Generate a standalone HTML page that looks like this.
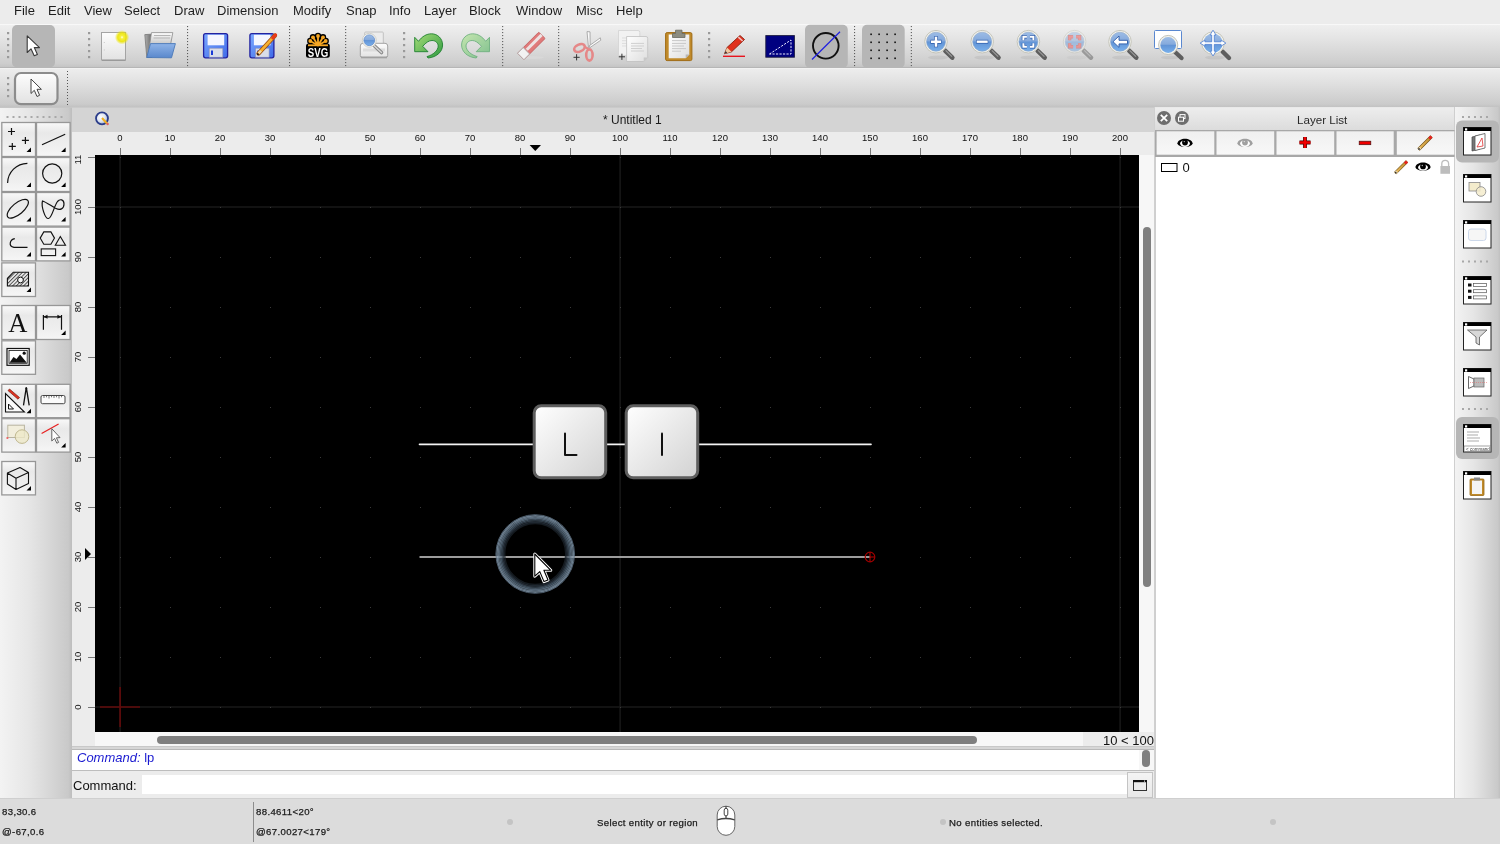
<!DOCTYPE html><html><head><meta charset="utf-8"><style>
*{box-sizing:border-box}
html,body{margin:0;padding:0;width:1500px;height:844px;overflow:hidden;background:#ececec;font-family:"Liberation Sans",sans-serif;}
.ab{position:absolute}
.menu{position:absolute;top:3px;font-size:13px;color:#1e1e1e;line-height:16px;white-space:nowrap}
svg{position:absolute;overflow:visible}
body>div,body>svg{will-change:transform}
.dots{position:absolute;width:2px;border-left:2px dotted #8a8a8a}
.hdl{position:absolute;width:3px;background:repeating-linear-gradient(#9a9a9a 0 3px,transparent 3px 6px)}
.tbtn{position:absolute;background:linear-gradient(#fbfbfb,#eeeeee 50%,#e2e2e2);border:2px solid #9c9c9c}
.st{position:absolute;font-size:9.6px;line-height:12px;color:#1a1a1a;white-space:nowrap;letter-spacing:0.36px;-webkit-text-stroke:0.25px #1a1a1a}
</style></head><body>
<div class="menu" style="left:14px">File</div>
<div class="menu" style="left:47.5px">Edit</div>
<div class="menu" style="left:83.5px">View</div>
<div class="menu" style="left:124.3px">Select</div>
<div class="menu" style="left:174px">Draw</div>
<div class="menu" style="left:217.3px">Dimension</div>
<div class="menu" style="left:292.5px">Modify</div>
<div class="menu" style="left:346px">Snap</div>
<div class="menu" style="left:389.3px">Info</div>
<div class="menu" style="left:424px">Layer</div>
<div class="menu" style="left:469.3px">Block</div>
<div class="menu" style="left:515.5px">Window</div>
<div class="menu" style="left:576px">Misc</div>
<div class="menu" style="left:616px">Help</div>
<div class="ab" style="left:0;top:24px;width:1500px;height:44px;background:linear-gradient(#efefef,#e3e3e3 35%,#cdcdcd 92%,#c4c4c4);border-top:1px solid #f8f8f8;border-bottom:1px solid #b6b6b6"></div>
<div class="ab" style="left:0;top:68px;width:1500px;height:39.5px;background:linear-gradient(#ededed,#e1e1e1 35%,#cbcbcb 92%,#c2c2c2);border-top:1px solid #f2f2f2;border-bottom:1px solid #b2b2b2"></div>
<div class="ab" style="left:0;top:107px;width:72px;height:691px;background:linear-gradient(90deg,#f3f3f3,#e6e6e6 40%,#c9c9c9 95%,#bdbdbd);border-top:1px solid #c6c6c6"></div>
<div class="ab" style="left:72px;top:107px;width:1082px;height:25px;background:#d4d4d4;border-top:1px solid #cacaca"></div>
<div class="ab" style="left:72px;top:132px;width:1082px;height:23px;background:#ececec"></div>
<div class="ab" style="left:602.5px;top:113px;font-size:12px;line-height:15px;color:#1a1a1a;white-space:nowrap">* Untitled 1</div>
<svg style="left:95px;top:111px" width="16" height="16"><defs><radialGradient id="mdi" cx="0.4" cy="0.4" r="0.6"><stop offset="0" stop-color="#fff"/><stop offset="0.6" stop-color="#dde4f0"/><stop offset="1" stop-color="#9aaccc"/></radialGradient></defs><circle cx="7" cy="7.3" r="6" fill="url(#mdi)" stroke="#2a3c8a" stroke-width="1.8"/><path d="M7 7 L12 12.5" stroke="#f0b020" stroke-width="2"/><circle cx="12.6" cy="13" r="1.2" fill="#e06060"/></svg>
<div class="ab" style="left:72px;top:155px;width:23px;height:591px;background:#ececec"></div>
<div class="ab" style="left:95px;top:155px;width:1044px;height:577px;background:#000"></div>
<div class="ab" style="left:1139px;top:155px;width:15px;height:577px;background:#f7f7f7"></div>
<div class="ab" style="left:95px;top:732px;width:988px;height:14px;background:#f7f7f7"></div>
<div class="ab" style="left:1083px;top:732px;width:71px;height:14px;background:#ececec"></div>
<div class="ab" style="left:1103px;top:732.8px;font-size:13px;line-height:16px;color:#111;white-space:nowrap">10 &lt; 100</div>
<div class="ab" style="left:1143px;top:227px;width:8px;height:360px;background:#7f7f7f;border-radius:4px"></div>
<div class="ab" style="left:157px;top:736px;width:820px;height:8px;background:#7f7f7f;border-radius:4px"></div>
<div class="ab" style="left:72px;top:746px;width:1082px;height:4px;background:#d6d6d6;border-top:1px solid #c8c8c8;border-bottom:1px solid #b8b8b8"></div>
<div class="ab" style="left:72px;top:750px;width:1082px;height:20px;background:#fff"></div>
<div class="ab" style="left:77px;top:750px;font-size:13px;line-height:16px;color:#1a1ad0;font-style:italic;white-space:nowrap">Command: <span style="font-style:normal">lp</span></div>
<div class="ab" style="left:1139px;top:750px;width:15px;height:20px;background:#f7f7f7"></div>
<div class="ab" style="left:1142px;top:750px;width:8px;height:17px;background:#7f7f7f;border-radius:4px"></div>
<div class="ab" style="left:72px;top:770px;width:1082px;height:28px;background:#ececec;border-top:1px solid #bdbdbd"></div>
<div class="ab" style="left:73px;top:778px;font-size:13px;line-height:16px;color:#111;white-space:nowrap">Command:</div>
<div class="ab" style="left:142px;top:775px;width:985px;height:19px;background:#fff"></div>
<div class="ab" style="left:1127px;top:772px;width:26px;height:26px;background:linear-gradient(#f4f4f4,#e8e8e8);border:1px solid #c4c4c4"></div>
<svg style="left:1133px;top:780px" width="14" height="11"><rect x="0.5" y="0.5" width="13" height="10" fill="#ececec" stroke="#333" stroke-width="1"/><rect x="0" y="0" width="14" height="2.2" fill="#111"/><rect x="11" y="0.6" width="1" height="1" fill="#fff"/></svg>
<div class="ab" style="left:1154px;top:107px;width:300px;height:691px;background:#e9e9e9;border-left:1px solid #d0d0d0"></div>
<div class="ab" style="left:1155px;top:108px;width:299px;height:22px;background:linear-gradient(#ededed,#dcdcdc);"></div>
<div class="ab" style="left:1297px;top:111.5px;font-size:11.6px;line-height:15px;color:#2a2a2a;white-space:nowrap">Layer List</div>
<div class="ab" style="left:1155px;top:157px;width:299px;height:641px;background:#fff;border-left:1px solid #cfcfcf"></div>
<div class="ab" style="left:1454px;top:107px;width:46px;height:691px;background:linear-gradient(90deg,#f3f3f3,#e6e6e6 40%,#c9c9c9 95%,#c0c0c0);border-left:1px solid #cfcfcf"></div>
<div class="ab" style="left:0;top:798px;width:1500px;height:46px;background:#dcdcdc;border-top:1px solid #cfcfcf"></div>
<div class="st" style="left:2px;top:806px">83,30.6</div>
<div class="st" style="left:2px;top:826px">@-67,0.6</div>
<div class="ab" style="left:253px;top:802px;width:1px;height:40px;background:#8c8c8c"></div>
<div class="st" style="left:256px;top:806px">88.4611&lt;20°</div>
<div class="st" style="left:256px;top:826px">@67.0027&lt;179°</div>
<div class="st" style="left:597px;top:817px">Select entity or region</div>
<div class="st" style="left:949px;top:817px">No entities selected.</div>
<svg style="left:716px;top:805px" width="20" height="32"><path d="M1.2 10 A8.8 8.8 0 0 1 18.8 10 V21.5 A8.8 8.8 0 0 1 1.2 21.5 Z" fill="#fff" stroke="#555" stroke-width="0.9"/><path d="M1.3 14.8 Q10 12.2 18.7 14.8" fill="none" stroke="#444" stroke-width="1.4"/><rect x="8.2" y="3.3" width="3.6" height="7.6" rx="1.8" fill="#fff" stroke="#444" stroke-width="1"/><path d="M10 1 V3.3 M10 10.9 V13.2" stroke="#444" stroke-width="1.2"/></svg>
<div class="ab" style="left:506.5px;top:819px;width:6px;height:6px;border-radius:3px;background:#c4c4c4"></div>
<div class="ab" style="left:939.5px;top:819px;width:6px;height:6px;border-radius:3px;background:#c4c4c4"></div>
<div class="ab" style="left:1269.5px;top:819px;width:6px;height:6px;border-radius:3px;background:#c4c4c4"></div>
<svg style="left:0;top:0" width="1500" height="844"><defs><clipPath id="vr"><rect x="72" y="155" width="23" height="591"/></clipPath><clipPath id="cv"><rect x="95" y="155" width="1044" height="577"/></clipPath><linearGradient id="key" x1="0" y1="0" x2="1" y2="1"><stop offset="0" stop-color="#ffffff"/><stop offset="1" stop-color="#d2d2d2"/></linearGradient><radialGradient id="ring" cx="0.5" cy="0.5" r="0.5"><stop offset="0.74" stop-color="#6c8294" stop-opacity="0"/><stop offset="0.86" stop-color="#6c8294" stop-opacity="0.9"/><stop offset="0.94" stop-color="#7890a2"/><stop offset="1" stop-color="#7890a2" stop-opacity="0"/></radialGradient></defs><g clip-path="url(#cv)"><line x1="120.1" y1="155" x2="120.1" y2="732" stroke="#181818" stroke-width="1.5"/><line x1="620.1" y1="155" x2="620.1" y2="732" stroke="#181818" stroke-width="1.5"/><line x1="1120.1" y1="155" x2="1120.1" y2="732" stroke="#181818" stroke-width="1.5"/><line x1="95" y1="207" x2="1139" y2="207" stroke="#181818" stroke-width="1.5"/><line x1="95" y1="707" x2="1139" y2="707" stroke="#181818" stroke-width="1.5"/><rect x="120" y="707" width="1" height="1" fill="#3a3a3a"/><rect x="120" y="657" width="1" height="1" fill="#3a3a3a"/><rect x="120" y="607" width="1" height="1" fill="#3a3a3a"/><rect x="120" y="557" width="1" height="1" fill="#3a3a3a"/><rect x="120" y="507" width="1" height="1" fill="#3a3a3a"/><rect x="120" y="457" width="1" height="1" fill="#3a3a3a"/><rect x="120" y="407" width="1" height="1" fill="#3a3a3a"/><rect x="120" y="357" width="1" height="1" fill="#3a3a3a"/><rect x="120" y="307" width="1" height="1" fill="#3a3a3a"/><rect x="120" y="257" width="1" height="1" fill="#3a3a3a"/><rect x="120" y="207" width="1" height="1" fill="#3a3a3a"/><rect x="120" y="157" width="1" height="1" fill="#3a3a3a"/><rect x="170" y="707" width="1" height="1" fill="#3a3a3a"/><rect x="170" y="657" width="1" height="1" fill="#3a3a3a"/><rect x="170" y="607" width="1" height="1" fill="#3a3a3a"/><rect x="170" y="557" width="1" height="1" fill="#3a3a3a"/><rect x="170" y="507" width="1" height="1" fill="#3a3a3a"/><rect x="170" y="457" width="1" height="1" fill="#3a3a3a"/><rect x="170" y="407" width="1" height="1" fill="#3a3a3a"/><rect x="170" y="357" width="1" height="1" fill="#3a3a3a"/><rect x="170" y="307" width="1" height="1" fill="#3a3a3a"/><rect x="170" y="257" width="1" height="1" fill="#3a3a3a"/><rect x="170" y="207" width="1" height="1" fill="#3a3a3a"/><rect x="170" y="157" width="1" height="1" fill="#3a3a3a"/><rect x="220" y="707" width="1" height="1" fill="#3a3a3a"/><rect x="220" y="657" width="1" height="1" fill="#3a3a3a"/><rect x="220" y="607" width="1" height="1" fill="#3a3a3a"/><rect x="220" y="557" width="1" height="1" fill="#3a3a3a"/><rect x="220" y="507" width="1" height="1" fill="#3a3a3a"/><rect x="220" y="457" width="1" height="1" fill="#3a3a3a"/><rect x="220" y="407" width="1" height="1" fill="#3a3a3a"/><rect x="220" y="357" width="1" height="1" fill="#3a3a3a"/><rect x="220" y="307" width="1" height="1" fill="#3a3a3a"/><rect x="220" y="257" width="1" height="1" fill="#3a3a3a"/><rect x="220" y="207" width="1" height="1" fill="#3a3a3a"/><rect x="220" y="157" width="1" height="1" fill="#3a3a3a"/><rect x="270" y="707" width="1" height="1" fill="#3a3a3a"/><rect x="270" y="657" width="1" height="1" fill="#3a3a3a"/><rect x="270" y="607" width="1" height="1" fill="#3a3a3a"/><rect x="270" y="557" width="1" height="1" fill="#3a3a3a"/><rect x="270" y="507" width="1" height="1" fill="#3a3a3a"/><rect x="270" y="457" width="1" height="1" fill="#3a3a3a"/><rect x="270" y="407" width="1" height="1" fill="#3a3a3a"/><rect x="270" y="357" width="1" height="1" fill="#3a3a3a"/><rect x="270" y="307" width="1" height="1" fill="#3a3a3a"/><rect x="270" y="257" width="1" height="1" fill="#3a3a3a"/><rect x="270" y="207" width="1" height="1" fill="#3a3a3a"/><rect x="270" y="157" width="1" height="1" fill="#3a3a3a"/><rect x="320" y="707" width="1" height="1" fill="#3a3a3a"/><rect x="320" y="657" width="1" height="1" fill="#3a3a3a"/><rect x="320" y="607" width="1" height="1" fill="#3a3a3a"/><rect x="320" y="557" width="1" height="1" fill="#3a3a3a"/><rect x="320" y="507" width="1" height="1" fill="#3a3a3a"/><rect x="320" y="457" width="1" height="1" fill="#3a3a3a"/><rect x="320" y="407" width="1" height="1" fill="#3a3a3a"/><rect x="320" y="357" width="1" height="1" fill="#3a3a3a"/><rect x="320" y="307" width="1" height="1" fill="#3a3a3a"/><rect x="320" y="257" width="1" height="1" fill="#3a3a3a"/><rect x="320" y="207" width="1" height="1" fill="#3a3a3a"/><rect x="320" y="157" width="1" height="1" fill="#3a3a3a"/><rect x="370" y="707" width="1" height="1" fill="#3a3a3a"/><rect x="370" y="657" width="1" height="1" fill="#3a3a3a"/><rect x="370" y="607" width="1" height="1" fill="#3a3a3a"/><rect x="370" y="557" width="1" height="1" fill="#3a3a3a"/><rect x="370" y="507" width="1" height="1" fill="#3a3a3a"/><rect x="370" y="457" width="1" height="1" fill="#3a3a3a"/><rect x="370" y="407" width="1" height="1" fill="#3a3a3a"/><rect x="370" y="357" width="1" height="1" fill="#3a3a3a"/><rect x="370" y="307" width="1" height="1" fill="#3a3a3a"/><rect x="370" y="257" width="1" height="1" fill="#3a3a3a"/><rect x="370" y="207" width="1" height="1" fill="#3a3a3a"/><rect x="370" y="157" width="1" height="1" fill="#3a3a3a"/><rect x="420" y="707" width="1" height="1" fill="#3a3a3a"/><rect x="420" y="657" width="1" height="1" fill="#3a3a3a"/><rect x="420" y="607" width="1" height="1" fill="#3a3a3a"/><rect x="420" y="557" width="1" height="1" fill="#3a3a3a"/><rect x="420" y="507" width="1" height="1" fill="#3a3a3a"/><rect x="420" y="457" width="1" height="1" fill="#3a3a3a"/><rect x="420" y="407" width="1" height="1" fill="#3a3a3a"/><rect x="420" y="357" width="1" height="1" fill="#3a3a3a"/><rect x="420" y="307" width="1" height="1" fill="#3a3a3a"/><rect x="420" y="257" width="1" height="1" fill="#3a3a3a"/><rect x="420" y="207" width="1" height="1" fill="#3a3a3a"/><rect x="420" y="157" width="1" height="1" fill="#3a3a3a"/><rect x="470" y="707" width="1" height="1" fill="#3a3a3a"/><rect x="470" y="657" width="1" height="1" fill="#3a3a3a"/><rect x="470" y="607" width="1" height="1" fill="#3a3a3a"/><rect x="470" y="557" width="1" height="1" fill="#3a3a3a"/><rect x="470" y="507" width="1" height="1" fill="#3a3a3a"/><rect x="470" y="457" width="1" height="1" fill="#3a3a3a"/><rect x="470" y="407" width="1" height="1" fill="#3a3a3a"/><rect x="470" y="357" width="1" height="1" fill="#3a3a3a"/><rect x="470" y="307" width="1" height="1" fill="#3a3a3a"/><rect x="470" y="257" width="1" height="1" fill="#3a3a3a"/><rect x="470" y="207" width="1" height="1" fill="#3a3a3a"/><rect x="470" y="157" width="1" height="1" fill="#3a3a3a"/><rect x="520" y="707" width="1" height="1" fill="#3a3a3a"/><rect x="520" y="657" width="1" height="1" fill="#3a3a3a"/><rect x="520" y="607" width="1" height="1" fill="#3a3a3a"/><rect x="520" y="557" width="1" height="1" fill="#3a3a3a"/><rect x="520" y="507" width="1" height="1" fill="#3a3a3a"/><rect x="520" y="457" width="1" height="1" fill="#3a3a3a"/><rect x="520" y="407" width="1" height="1" fill="#3a3a3a"/><rect x="520" y="357" width="1" height="1" fill="#3a3a3a"/><rect x="520" y="307" width="1" height="1" fill="#3a3a3a"/><rect x="520" y="257" width="1" height="1" fill="#3a3a3a"/><rect x="520" y="207" width="1" height="1" fill="#3a3a3a"/><rect x="520" y="157" width="1" height="1" fill="#3a3a3a"/><rect x="570" y="707" width="1" height="1" fill="#3a3a3a"/><rect x="570" y="657" width="1" height="1" fill="#3a3a3a"/><rect x="570" y="607" width="1" height="1" fill="#3a3a3a"/><rect x="570" y="557" width="1" height="1" fill="#3a3a3a"/><rect x="570" y="507" width="1" height="1" fill="#3a3a3a"/><rect x="570" y="457" width="1" height="1" fill="#3a3a3a"/><rect x="570" y="407" width="1" height="1" fill="#3a3a3a"/><rect x="570" y="357" width="1" height="1" fill="#3a3a3a"/><rect x="570" y="307" width="1" height="1" fill="#3a3a3a"/><rect x="570" y="257" width="1" height="1" fill="#3a3a3a"/><rect x="570" y="207" width="1" height="1" fill="#3a3a3a"/><rect x="570" y="157" width="1" height="1" fill="#3a3a3a"/><rect x="620" y="707" width="1" height="1" fill="#3a3a3a"/><rect x="620" y="657" width="1" height="1" fill="#3a3a3a"/><rect x="620" y="607" width="1" height="1" fill="#3a3a3a"/><rect x="620" y="557" width="1" height="1" fill="#3a3a3a"/><rect x="620" y="507" width="1" height="1" fill="#3a3a3a"/><rect x="620" y="457" width="1" height="1" fill="#3a3a3a"/><rect x="620" y="407" width="1" height="1" fill="#3a3a3a"/><rect x="620" y="357" width="1" height="1" fill="#3a3a3a"/><rect x="620" y="307" width="1" height="1" fill="#3a3a3a"/><rect x="620" y="257" width="1" height="1" fill="#3a3a3a"/><rect x="620" y="207" width="1" height="1" fill="#3a3a3a"/><rect x="620" y="157" width="1" height="1" fill="#3a3a3a"/><rect x="670" y="707" width="1" height="1" fill="#3a3a3a"/><rect x="670" y="657" width="1" height="1" fill="#3a3a3a"/><rect x="670" y="607" width="1" height="1" fill="#3a3a3a"/><rect x="670" y="557" width="1" height="1" fill="#3a3a3a"/><rect x="670" y="507" width="1" height="1" fill="#3a3a3a"/><rect x="670" y="457" width="1" height="1" fill="#3a3a3a"/><rect x="670" y="407" width="1" height="1" fill="#3a3a3a"/><rect x="670" y="357" width="1" height="1" fill="#3a3a3a"/><rect x="670" y="307" width="1" height="1" fill="#3a3a3a"/><rect x="670" y="257" width="1" height="1" fill="#3a3a3a"/><rect x="670" y="207" width="1" height="1" fill="#3a3a3a"/><rect x="670" y="157" width="1" height="1" fill="#3a3a3a"/><rect x="720" y="707" width="1" height="1" fill="#3a3a3a"/><rect x="720" y="657" width="1" height="1" fill="#3a3a3a"/><rect x="720" y="607" width="1" height="1" fill="#3a3a3a"/><rect x="720" y="557" width="1" height="1" fill="#3a3a3a"/><rect x="720" y="507" width="1" height="1" fill="#3a3a3a"/><rect x="720" y="457" width="1" height="1" fill="#3a3a3a"/><rect x="720" y="407" width="1" height="1" fill="#3a3a3a"/><rect x="720" y="357" width="1" height="1" fill="#3a3a3a"/><rect x="720" y="307" width="1" height="1" fill="#3a3a3a"/><rect x="720" y="257" width="1" height="1" fill="#3a3a3a"/><rect x="720" y="207" width="1" height="1" fill="#3a3a3a"/><rect x="720" y="157" width="1" height="1" fill="#3a3a3a"/><rect x="770" y="707" width="1" height="1" fill="#3a3a3a"/><rect x="770" y="657" width="1" height="1" fill="#3a3a3a"/><rect x="770" y="607" width="1" height="1" fill="#3a3a3a"/><rect x="770" y="557" width="1" height="1" fill="#3a3a3a"/><rect x="770" y="507" width="1" height="1" fill="#3a3a3a"/><rect x="770" y="457" width="1" height="1" fill="#3a3a3a"/><rect x="770" y="407" width="1" height="1" fill="#3a3a3a"/><rect x="770" y="357" width="1" height="1" fill="#3a3a3a"/><rect x="770" y="307" width="1" height="1" fill="#3a3a3a"/><rect x="770" y="257" width="1" height="1" fill="#3a3a3a"/><rect x="770" y="207" width="1" height="1" fill="#3a3a3a"/><rect x="770" y="157" width="1" height="1" fill="#3a3a3a"/><rect x="820" y="707" width="1" height="1" fill="#3a3a3a"/><rect x="820" y="657" width="1" height="1" fill="#3a3a3a"/><rect x="820" y="607" width="1" height="1" fill="#3a3a3a"/><rect x="820" y="557" width="1" height="1" fill="#3a3a3a"/><rect x="820" y="507" width="1" height="1" fill="#3a3a3a"/><rect x="820" y="457" width="1" height="1" fill="#3a3a3a"/><rect x="820" y="407" width="1" height="1" fill="#3a3a3a"/><rect x="820" y="357" width="1" height="1" fill="#3a3a3a"/><rect x="820" y="307" width="1" height="1" fill="#3a3a3a"/><rect x="820" y="257" width="1" height="1" fill="#3a3a3a"/><rect x="820" y="207" width="1" height="1" fill="#3a3a3a"/><rect x="820" y="157" width="1" height="1" fill="#3a3a3a"/><rect x="870" y="707" width="1" height="1" fill="#3a3a3a"/><rect x="870" y="657" width="1" height="1" fill="#3a3a3a"/><rect x="870" y="607" width="1" height="1" fill="#3a3a3a"/><rect x="870" y="557" width="1" height="1" fill="#3a3a3a"/><rect x="870" y="507" width="1" height="1" fill="#3a3a3a"/><rect x="870" y="457" width="1" height="1" fill="#3a3a3a"/><rect x="870" y="407" width="1" height="1" fill="#3a3a3a"/><rect x="870" y="357" width="1" height="1" fill="#3a3a3a"/><rect x="870" y="307" width="1" height="1" fill="#3a3a3a"/><rect x="870" y="257" width="1" height="1" fill="#3a3a3a"/><rect x="870" y="207" width="1" height="1" fill="#3a3a3a"/><rect x="870" y="157" width="1" height="1" fill="#3a3a3a"/><rect x="920" y="707" width="1" height="1" fill="#3a3a3a"/><rect x="920" y="657" width="1" height="1" fill="#3a3a3a"/><rect x="920" y="607" width="1" height="1" fill="#3a3a3a"/><rect x="920" y="557" width="1" height="1" fill="#3a3a3a"/><rect x="920" y="507" width="1" height="1" fill="#3a3a3a"/><rect x="920" y="457" width="1" height="1" fill="#3a3a3a"/><rect x="920" y="407" width="1" height="1" fill="#3a3a3a"/><rect x="920" y="357" width="1" height="1" fill="#3a3a3a"/><rect x="920" y="307" width="1" height="1" fill="#3a3a3a"/><rect x="920" y="257" width="1" height="1" fill="#3a3a3a"/><rect x="920" y="207" width="1" height="1" fill="#3a3a3a"/><rect x="920" y="157" width="1" height="1" fill="#3a3a3a"/><rect x="970" y="707" width="1" height="1" fill="#3a3a3a"/><rect x="970" y="657" width="1" height="1" fill="#3a3a3a"/><rect x="970" y="607" width="1" height="1" fill="#3a3a3a"/><rect x="970" y="557" width="1" height="1" fill="#3a3a3a"/><rect x="970" y="507" width="1" height="1" fill="#3a3a3a"/><rect x="970" y="457" width="1" height="1" fill="#3a3a3a"/><rect x="970" y="407" width="1" height="1" fill="#3a3a3a"/><rect x="970" y="357" width="1" height="1" fill="#3a3a3a"/><rect x="970" y="307" width="1" height="1" fill="#3a3a3a"/><rect x="970" y="257" width="1" height="1" fill="#3a3a3a"/><rect x="970" y="207" width="1" height="1" fill="#3a3a3a"/><rect x="970" y="157" width="1" height="1" fill="#3a3a3a"/><rect x="1020" y="707" width="1" height="1" fill="#3a3a3a"/><rect x="1020" y="657" width="1" height="1" fill="#3a3a3a"/><rect x="1020" y="607" width="1" height="1" fill="#3a3a3a"/><rect x="1020" y="557" width="1" height="1" fill="#3a3a3a"/><rect x="1020" y="507" width="1" height="1" fill="#3a3a3a"/><rect x="1020" y="457" width="1" height="1" fill="#3a3a3a"/><rect x="1020" y="407" width="1" height="1" fill="#3a3a3a"/><rect x="1020" y="357" width="1" height="1" fill="#3a3a3a"/><rect x="1020" y="307" width="1" height="1" fill="#3a3a3a"/><rect x="1020" y="257" width="1" height="1" fill="#3a3a3a"/><rect x="1020" y="207" width="1" height="1" fill="#3a3a3a"/><rect x="1020" y="157" width="1" height="1" fill="#3a3a3a"/><rect x="1070" y="707" width="1" height="1" fill="#3a3a3a"/><rect x="1070" y="657" width="1" height="1" fill="#3a3a3a"/><rect x="1070" y="607" width="1" height="1" fill="#3a3a3a"/><rect x="1070" y="557" width="1" height="1" fill="#3a3a3a"/><rect x="1070" y="507" width="1" height="1" fill="#3a3a3a"/><rect x="1070" y="457" width="1" height="1" fill="#3a3a3a"/><rect x="1070" y="407" width="1" height="1" fill="#3a3a3a"/><rect x="1070" y="357" width="1" height="1" fill="#3a3a3a"/><rect x="1070" y="307" width="1" height="1" fill="#3a3a3a"/><rect x="1070" y="257" width="1" height="1" fill="#3a3a3a"/><rect x="1070" y="207" width="1" height="1" fill="#3a3a3a"/><rect x="1070" y="157" width="1" height="1" fill="#3a3a3a"/><rect x="1120" y="707" width="1" height="1" fill="#3a3a3a"/><rect x="1120" y="657" width="1" height="1" fill="#3a3a3a"/><rect x="1120" y="607" width="1" height="1" fill="#3a3a3a"/><rect x="1120" y="557" width="1" height="1" fill="#3a3a3a"/><rect x="1120" y="507" width="1" height="1" fill="#3a3a3a"/><rect x="1120" y="457" width="1" height="1" fill="#3a3a3a"/><rect x="1120" y="407" width="1" height="1" fill="#3a3a3a"/><rect x="1120" y="357" width="1" height="1" fill="#3a3a3a"/><rect x="1120" y="307" width="1" height="1" fill="#3a3a3a"/><rect x="1120" y="257" width="1" height="1" fill="#3a3a3a"/><rect x="1120" y="207" width="1" height="1" fill="#3a3a3a"/><rect x="1120" y="157" width="1" height="1" fill="#3a3a3a"/><line x1="100" y1="707" x2="140" y2="707" stroke="#620a0a" stroke-width="1.6"/><line x1="120.1" y1="687" x2="120.1" y2="727" stroke="#620a0a" stroke-width="1.6"/><line x1="419.5" y1="444.4" x2="871" y2="444.4" stroke="#f4f4f4" stroke-width="1.6" stroke-linecap="round"/><line x1="419.5" y1="557" x2="870" y2="557" stroke="#9c9c9c" stroke-width="2"/><circle cx="870" cy="557" r="4.8" fill="none" stroke="#a00000" stroke-width="1.2"/><line x1="870" y1="552" x2="870" y2="562" stroke="#a00000" stroke-width="1.2"/><line x1="870" y1="557" x2="875" y2="557" stroke="#a00000" stroke-width="1.2"/><g opacity="0.82"><circle cx="535.2" cy="554" r="30.5" fill="none" stroke="#1a2128" stroke-width="1.4"/><circle cx="535.2" cy="554" r="31.8" fill="none" stroke="#27313c" stroke-width="1.4"/><circle cx="535.2" cy="554" r="33.1" fill="none" stroke="#3a4856" stroke-width="1.4"/><circle cx="535.2" cy="554" r="34.4" fill="none" stroke="#506476" stroke-width="1.4"/><circle cx="535.2" cy="554" r="35.7" fill="none" stroke="#667b8e" stroke-width="1.4"/><circle cx="535.2" cy="554" r="37" fill="none" stroke="#748a9e" stroke-width="1.4"/><circle cx="535.2" cy="554" r="38.3" fill="none" stroke="#869cb0" stroke-width="1.5"/><circle cx="535.2" cy="554" r="39.3" fill="none" stroke="#63778a" stroke-width="1.0"/></g><rect x="534.2" y="405.8" width="71.5" height="72" rx="7" ry="7" fill="url(#key)" stroke="#5e5e5e" stroke-width="3"/><rect x="626.2" y="405.8" width="71.5" height="72" rx="7" ry="7" fill="url(#key)" stroke="#5e5e5e" stroke-width="3"/><path d="M565 433.5 V455 H576.5" fill="none" stroke="#111" stroke-width="2" stroke-linecap="round" stroke-linejoin="round"/><path d="M662 433.5 V455" fill="none" stroke="#111" stroke-width="2" stroke-linecap="round"/><path d="M534.8 554 L534.8 576.2 L539.8 571.6 L544 581.6 L548 580 L543.9 570.3 L550.8 570.3 Z" fill="#fff" stroke="#fff" stroke-width="3" stroke-linejoin="round"/><path d="M534.8 554 L534.8 576.2 L539.8 571.6 L544 581.6 L548 580 L543.9 570.3 L550.8 570.3 Z" fill="#fff" stroke="#000" stroke-width="1.1" stroke-linejoin="round"/></g><line x1="120.5" y1="148" x2="120.5" y2="155" stroke="#777" stroke-width="1"/><text x="120" y="140.8" font-size="9.5" text-anchor="middle" fill="#111">0</text><line x1="170.5" y1="148" x2="170.5" y2="155" stroke="#777" stroke-width="1"/><text x="170" y="140.8" font-size="9.5" text-anchor="middle" fill="#111">10</text><line x1="220.5" y1="148" x2="220.5" y2="155" stroke="#777" stroke-width="1"/><text x="220" y="140.8" font-size="9.5" text-anchor="middle" fill="#111">20</text><line x1="270.5" y1="148" x2="270.5" y2="155" stroke="#777" stroke-width="1"/><text x="270" y="140.8" font-size="9.5" text-anchor="middle" fill="#111">30</text><line x1="320.5" y1="148" x2="320.5" y2="155" stroke="#777" stroke-width="1"/><text x="320" y="140.8" font-size="9.5" text-anchor="middle" fill="#111">40</text><line x1="370.5" y1="148" x2="370.5" y2="155" stroke="#777" stroke-width="1"/><text x="370" y="140.8" font-size="9.5" text-anchor="middle" fill="#111">50</text><line x1="420.5" y1="148" x2="420.5" y2="155" stroke="#777" stroke-width="1"/><text x="420" y="140.8" font-size="9.5" text-anchor="middle" fill="#111">60</text><line x1="470.5" y1="148" x2="470.5" y2="155" stroke="#777" stroke-width="1"/><text x="470" y="140.8" font-size="9.5" text-anchor="middle" fill="#111">70</text><line x1="520.5" y1="148" x2="520.5" y2="155" stroke="#777" stroke-width="1"/><text x="520" y="140.8" font-size="9.5" text-anchor="middle" fill="#111">80</text><line x1="570.5" y1="148" x2="570.5" y2="155" stroke="#777" stroke-width="1"/><text x="570" y="140.8" font-size="9.5" text-anchor="middle" fill="#111">90</text><line x1="620.5" y1="148" x2="620.5" y2="155" stroke="#777" stroke-width="1"/><text x="620" y="140.8" font-size="9.5" text-anchor="middle" fill="#111">100</text><line x1="670.5" y1="148" x2="670.5" y2="155" stroke="#777" stroke-width="1"/><text x="670" y="140.8" font-size="9.5" text-anchor="middle" fill="#111">110</text><line x1="720.5" y1="148" x2="720.5" y2="155" stroke="#777" stroke-width="1"/><text x="720" y="140.8" font-size="9.5" text-anchor="middle" fill="#111">120</text><line x1="770.5" y1="148" x2="770.5" y2="155" stroke="#777" stroke-width="1"/><text x="770" y="140.8" font-size="9.5" text-anchor="middle" fill="#111">130</text><line x1="820.5" y1="148" x2="820.5" y2="155" stroke="#777" stroke-width="1"/><text x="820" y="140.8" font-size="9.5" text-anchor="middle" fill="#111">140</text><line x1="870.5" y1="148" x2="870.5" y2="155" stroke="#777" stroke-width="1"/><text x="870" y="140.8" font-size="9.5" text-anchor="middle" fill="#111">150</text><line x1="920.5" y1="148" x2="920.5" y2="155" stroke="#777" stroke-width="1"/><text x="920" y="140.8" font-size="9.5" text-anchor="middle" fill="#111">160</text><line x1="970.5" y1="148" x2="970.5" y2="155" stroke="#777" stroke-width="1"/><text x="970" y="140.8" font-size="9.5" text-anchor="middle" fill="#111">170</text><line x1="1020.5" y1="148" x2="1020.5" y2="155" stroke="#777" stroke-width="1"/><text x="1020" y="140.8" font-size="9.5" text-anchor="middle" fill="#111">180</text><line x1="1070.5" y1="148" x2="1070.5" y2="155" stroke="#777" stroke-width="1"/><text x="1070" y="140.8" font-size="9.5" text-anchor="middle" fill="#111">190</text><line x1="1120.5" y1="148" x2="1120.5" y2="155" stroke="#777" stroke-width="1"/><text x="1120" y="140.8" font-size="9.5" text-anchor="middle" fill="#111">200</text><g clip-path="url(#vr)"><line x1="88" y1="707.5" x2="95" y2="707.5" stroke="#777" stroke-width="1"/><text x="0" y="0" transform="translate(80.6 707) rotate(-90)" font-size="9.5" text-anchor="middle" fill="#111">0</text><line x1="88" y1="657.5" x2="95" y2="657.5" stroke="#777" stroke-width="1"/><text x="0" y="0" transform="translate(80.6 657) rotate(-90)" font-size="9.5" text-anchor="middle" fill="#111">10</text><line x1="88" y1="607.5" x2="95" y2="607.5" stroke="#777" stroke-width="1"/><text x="0" y="0" transform="translate(80.6 607) rotate(-90)" font-size="9.5" text-anchor="middle" fill="#111">20</text><line x1="88" y1="557.5" x2="95" y2="557.5" stroke="#777" stroke-width="1"/><text x="0" y="0" transform="translate(80.6 557) rotate(-90)" font-size="9.5" text-anchor="middle" fill="#111">30</text><line x1="88" y1="507.5" x2="95" y2="507.5" stroke="#777" stroke-width="1"/><text x="0" y="0" transform="translate(80.6 507) rotate(-90)" font-size="9.5" text-anchor="middle" fill="#111">40</text><line x1="88" y1="457.5" x2="95" y2="457.5" stroke="#777" stroke-width="1"/><text x="0" y="0" transform="translate(80.6 457) rotate(-90)" font-size="9.5" text-anchor="middle" fill="#111">50</text><line x1="88" y1="407.5" x2="95" y2="407.5" stroke="#777" stroke-width="1"/><text x="0" y="0" transform="translate(80.6 407) rotate(-90)" font-size="9.5" text-anchor="middle" fill="#111">60</text><line x1="88" y1="357.5" x2="95" y2="357.5" stroke="#777" stroke-width="1"/><text x="0" y="0" transform="translate(80.6 357) rotate(-90)" font-size="9.5" text-anchor="middle" fill="#111">70</text><line x1="88" y1="307.5" x2="95" y2="307.5" stroke="#777" stroke-width="1"/><text x="0" y="0" transform="translate(80.6 307) rotate(-90)" font-size="9.5" text-anchor="middle" fill="#111">80</text><line x1="88" y1="257.5" x2="95" y2="257.5" stroke="#777" stroke-width="1"/><text x="0" y="0" transform="translate(80.6 257) rotate(-90)" font-size="9.5" text-anchor="middle" fill="#111">90</text><line x1="88" y1="207.5" x2="95" y2="207.5" stroke="#777" stroke-width="1"/><text x="0" y="0" transform="translate(80.6 207) rotate(-90)" font-size="9.5" text-anchor="middle" fill="#111">100</text><line x1="88" y1="157.5" x2="95" y2="157.5" stroke="#777" stroke-width="1"/><text x="0" y="0" transform="translate(80.6 157) rotate(-90)" font-size="9.5" text-anchor="middle" fill="#111">110</text></g><path d="M529.6 145 H541 L535.3 151 Z" fill="#000"/><path d="M85 548 V560 L91 554 Z" fill="#000"/></svg>
<svg style="left:0;top:0" width="1500" height="110"><defs>
<linearGradient id="pg" x1="0" y1="0" x2="0" y2="1"><stop offset="0" stop-color="#fdfdfd"/><stop offset="1" stop-color="#e2e2e2"/></linearGradient>
<radialGradient id="glow"><stop offset="0" stop-color="#ffffe8"/><stop offset="0.22" stop-color="#f6f040"/><stop offset="0.6" stop-color="#ece400" stop-opacity="0.9"/><stop offset="1" stop-color="#ece400" stop-opacity="0"/></radialGradient>
<linearGradient id="papg" x1="0" y1="0" x2="0" y2="1"><stop offset="0" stop-color="#fdfdfd"/><stop offset="0.5" stop-color="#d0d0d0"/><stop offset="1" stop-color="#b8b8b8"/></linearGradient>
<linearGradient id="fback" x1="0" y1="0" x2="1" y2="0"><stop offset="0" stop-color="#b0b0b0"/><stop offset="1" stop-color="#6a6a6a"/></linearGradient>
<linearGradient id="blu" x1="0" y1="0" x2="0" y2="1"><stop offset="0" stop-color="#8fb4e8"/><stop offset="1" stop-color="#5a88cc"/></linearGradient>
<linearGradient id="flop" x1="0" y1="0" x2="1" y2="1"><stop offset="0" stop-color="#7aa8ff"/><stop offset="1" stop-color="#3f6ae8"/></linearGradient>
<linearGradient id="grn" x1="0" y1="0" x2="1" y2="1"><stop offset="0" stop-color="#a6dc78"/><stop offset="1" stop-color="#2e9a40"/></linearGradient>
<linearGradient id="grn2" x1="1" y1="0" x2="0" y2="1"><stop offset="0" stop-color="#c6e6b0"/><stop offset="1" stop-color="#7fc08e"/></linearGradient>
<linearGradient id="lens2" x1="0" y1="0" x2="0" y2="1"><stop offset="0" stop-color="#9cbce6"/><stop offset="0.45" stop-color="#86aadc"/><stop offset="0.52" stop-color="#6294d6"/><stop offset="1" stop-color="#78b0ec"/></linearGradient>
<radialGradient id="lens" cx="0.45" cy="0.4" r="0.6"><stop offset="0" stop-color="#c8dcf6"/><stop offset="0.5" stop-color="#86acde"/><stop offset="1" stop-color="#4f7fc6"/></radialGradient>
<linearGradient id="pap" x1="0" y1="0" x2="1" y2="1"><stop offset="0" stop-color="#ffffff"/><stop offset="1" stop-color="#dedede"/></linearGradient>
</defs><rect x="7" y="32" width="2.2" height="2.2" fill="#9a9a9a"/><rect x="7" y="38" width="2.2" height="2.2" fill="#9a9a9a"/><rect x="7" y="44" width="2.2" height="2.2" fill="#9a9a9a"/><rect x="7" y="50" width="2.2" height="2.2" fill="#9a9a9a"/><rect x="7" y="56" width="2.2" height="2.2" fill="#9a9a9a"/><rect x="88" y="32" width="2.2" height="2.2" fill="#9a9a9a"/><rect x="88" y="38" width="2.2" height="2.2" fill="#9a9a9a"/><rect x="88" y="44" width="2.2" height="2.2" fill="#9a9a9a"/><rect x="88" y="50" width="2.2" height="2.2" fill="#9a9a9a"/><rect x="88" y="56" width="2.2" height="2.2" fill="#9a9a9a"/><rect x="403" y="32" width="2.2" height="2.2" fill="#9a9a9a"/><rect x="403" y="38" width="2.2" height="2.2" fill="#9a9a9a"/><rect x="403" y="44" width="2.2" height="2.2" fill="#9a9a9a"/><rect x="403" y="50" width="2.2" height="2.2" fill="#9a9a9a"/><rect x="403" y="56" width="2.2" height="2.2" fill="#9a9a9a"/><rect x="708" y="32" width="2.2" height="2.2" fill="#9a9a9a"/><rect x="708" y="38" width="2.2" height="2.2" fill="#9a9a9a"/><rect x="708" y="44" width="2.2" height="2.2" fill="#9a9a9a"/><rect x="708" y="50" width="2.2" height="2.2" fill="#9a9a9a"/><rect x="708" y="56" width="2.2" height="2.2" fill="#9a9a9a"/><rect x="12" y="25" width="43" height="42.5" rx="5" fill="#b6b6b6"/><path d="M27.2 35.8 V52.5 L31 48.8 L34.2 55.8 L37.4 54.4 L34.3 47.6 L39.5 47.6 Z" fill="#fff" stroke="#3a3a3a" stroke-width="1.1" stroke-linejoin="round"/><rect x="101.5" y="32.5" width="24" height="27.5" fill="url(#pg)" stroke="#a4a4a4" stroke-width="1"/><rect x="102" y="59.8" width="23.5" height="1.2" fill="#9a9a9a"/><rect x="103.8" y="42" width="1" height="1" fill="#c8c8c8"/><rect x="103.8" y="49.5" width="1" height="1" fill="#c8c8c8"/><circle cx="122" cy="37.3" r="7.2" fill="url(#glow)"/><path d="M144.8 34.6 L151.5 34.2 L151.5 57.5 L146.8 57.5 Z" fill="url(#fback)" stroke="#777" stroke-width="0.8"/><path d="M151.5 32.6 L172.8 32.6 L170.5 45 L148.5 52 Z" fill="url(#papg)" stroke="#8a8a8a" stroke-width="0.8"/><path d="M154 35.5 H170.5 M153.5 38 H170" stroke="#b4b4b4" stroke-width="1.2"/><path d="M146.7 57.5 L150.5 43.6 L175.4 43.6 L171.5 57.8 Z" fill="url(#blu)" stroke="#4a78b8" stroke-width="0.9"/><rect x="187.0" y="26.0" width="1.1" height="1.1" fill="#5c5c5c"/><rect x="187.0" y="29.0" width="1.1" height="1.1" fill="#5c5c5c"/><rect x="187.0" y="32.0" width="1.1" height="1.1" fill="#5c5c5c"/><rect x="187.0" y="35.0" width="1.1" height="1.1" fill="#5c5c5c"/><rect x="187.0" y="38.0" width="1.1" height="1.1" fill="#5c5c5c"/><rect x="187.0" y="41.0" width="1.1" height="1.1" fill="#5c5c5c"/><rect x="187.0" y="44.0" width="1.1" height="1.1" fill="#5c5c5c"/><rect x="187.0" y="47.0" width="1.1" height="1.1" fill="#5c5c5c"/><rect x="187.0" y="50.0" width="1.1" height="1.1" fill="#5c5c5c"/><rect x="187.0" y="53.0" width="1.1" height="1.1" fill="#5c5c5c"/><rect x="187.0" y="56.0" width="1.1" height="1.1" fill="#5c5c5c"/><rect x="187.0" y="59.0" width="1.1" height="1.1" fill="#5c5c5c"/><rect x="187.0" y="62.0" width="1.1" height="1.1" fill="#5c5c5c"/><rect x="187.0" y="65.0" width="1.1" height="1.1" fill="#5c5c5c"/><rect x="203.6" y="33.6" width="24" height="24.2" rx="2" fill="url(#flop)" stroke="#2222a0" stroke-width="1.3"/><rect x="207.6" y="34.8" width="16.6" height="10.5" fill="#f4f6ff"/><rect x="209.2" y="48.2" width="13.6" height="9" fill="#dadde8" stroke="#8a8fb8" stroke-width="0.6"/><rect x="211" y="50.5" width="2" height="4.5" fill="#1a3ad8"/><rect x="249.9" y="33.6" width="24" height="24.2" rx="2" fill="url(#flop)" stroke="#2222a0" stroke-width="1.3"/><rect x="253.9" y="34.8" width="16.6" height="10.5" fill="#f4f6ff"/><rect x="255.5" y="48.2" width="13.6" height="9" fill="#dadde8" stroke="#8a8fb8" stroke-width="0.6"/><rect x="257.3" y="50.5" width="2" height="4.5" fill="#1a3ad8"/><path d="M258.5 53.5 L275 35.5" stroke="#9a4a10" stroke-width="4.2" stroke-linecap="round"/><path d="M258.5 53.5 L275 35.5" stroke="#f6b030" stroke-width="2.6"/><path d="M272.8 37.9 L275.5 35" stroke="#e83818" stroke-width="3.2" stroke-linecap="round"/><path d="M258.5 53.5 L261 50.8" stroke="#f0d8a8" stroke-width="2.4"/><circle cx="257.8" cy="54.3" r="1" fill="#222"/><rect x="289.0" y="26.0" width="1.1" height="1.1" fill="#5c5c5c"/><rect x="289.0" y="29.0" width="1.1" height="1.1" fill="#5c5c5c"/><rect x="289.0" y="32.0" width="1.1" height="1.1" fill="#5c5c5c"/><rect x="289.0" y="35.0" width="1.1" height="1.1" fill="#5c5c5c"/><rect x="289.0" y="38.0" width="1.1" height="1.1" fill="#5c5c5c"/><rect x="289.0" y="41.0" width="1.1" height="1.1" fill="#5c5c5c"/><rect x="289.0" y="44.0" width="1.1" height="1.1" fill="#5c5c5c"/><rect x="289.0" y="47.0" width="1.1" height="1.1" fill="#5c5c5c"/><rect x="289.0" y="50.0" width="1.1" height="1.1" fill="#5c5c5c"/><rect x="289.0" y="53.0" width="1.1" height="1.1" fill="#5c5c5c"/><rect x="289.0" y="56.0" width="1.1" height="1.1" fill="#5c5c5c"/><rect x="289.0" y="59.0" width="1.1" height="1.1" fill="#5c5c5c"/><rect x="289.0" y="62.0" width="1.1" height="1.1" fill="#5c5c5c"/><rect x="289.0" y="65.0" width="1.1" height="1.1" fill="#5c5c5c"/><rect x="306" y="43.6" width="23.8" height="14.2" rx="2.5" fill="#000"/><path d="M318 45.5 L310.3 41 M318 45.5 L313 37.3 M318 45.5 L318 35.9 M318 45.5 L323 37.3 M318 45.5 L325.7 41" stroke="#000" stroke-width="4.4" stroke-linecap="round"/><circle cx="310.3" cy="41" r="3.2" fill="#000"/><circle cx="313" cy="37.3" r="3.2" fill="#000"/><circle cx="318" cy="35.9" r="3.2" fill="#000"/><circle cx="323" cy="37.3" r="3.2" fill="#000"/><circle cx="325.7" cy="41" r="3.2" fill="#000"/><path d="M318 45.5 L310.3 41 M318 45.5 L313 37.3 M318 45.5 L318 35.9 M318 45.5 L323 37.3 M318 45.5 L325.7 41" stroke="#f5a623" stroke-width="1.8" stroke-linecap="round"/><circle cx="310.3" cy="41" r="1.9" fill="#f5a623"/><circle cx="313" cy="37.3" r="1.9" fill="#f5a623"/><circle cx="318" cy="35.9" r="1.9" fill="#f5a623"/><circle cx="323" cy="37.3" r="1.9" fill="#f5a623"/><circle cx="325.7" cy="41" r="1.9" fill="#f5a623"/><rect x="308" y="44.4" width="20" height="1.8" fill="#f5a623"/><text x="0" y="0" transform="translate(318 56.7) scale(0.72 1)" font-size="13.4" font-weight="bold" fill="#fff" text-anchor="middle" font-family="Liberation Sans">SVG</text><rect x="345.1" y="26.0" width="1.1" height="1.1" fill="#5c5c5c"/><rect x="345.1" y="29.0" width="1.1" height="1.1" fill="#5c5c5c"/><rect x="345.1" y="32.0" width="1.1" height="1.1" fill="#5c5c5c"/><rect x="345.1" y="35.0" width="1.1" height="1.1" fill="#5c5c5c"/><rect x="345.1" y="38.0" width="1.1" height="1.1" fill="#5c5c5c"/><rect x="345.1" y="41.0" width="1.1" height="1.1" fill="#5c5c5c"/><rect x="345.1" y="44.0" width="1.1" height="1.1" fill="#5c5c5c"/><rect x="345.1" y="47.0" width="1.1" height="1.1" fill="#5c5c5c"/><rect x="345.1" y="50.0" width="1.1" height="1.1" fill="#5c5c5c"/><rect x="345.1" y="53.0" width="1.1" height="1.1" fill="#5c5c5c"/><rect x="345.1" y="56.0" width="1.1" height="1.1" fill="#5c5c5c"/><rect x="345.1" y="59.0" width="1.1" height="1.1" fill="#5c5c5c"/><rect x="345.1" y="62.0" width="1.1" height="1.1" fill="#5c5c5c"/><rect x="345.1" y="65.0" width="1.1" height="1.1" fill="#5c5c5c"/><rect x="364.7" y="32" width="18.6" height="13" rx="1" fill="#ececec" stroke="#b8b8b8" stroke-width="0.8"/><path d="M360.3 46 Q360.3 43.3 363 43.3 H385 Q387.7 43.3 387.7 46 V55.5 Q387.7 57.5 385.5 57.5 H362.5 Q360.3 57.5 360.3 55.5 Z" fill="url(#pg)" stroke="#9a9a9a" stroke-width="0.9"/><rect x="361" y="56.5" width="26" height="1.8" fill="#a0a0a0"/><rect x="363" y="48.5" width="22" height="3" fill="#dcdcdc"/><path d="M374 45.5 L381.5 52.5" stroke="#8a8a8a" stroke-width="3.6" stroke-linecap="round"/><path d="M374 45.5 L381.5 52.5" stroke="#d8d8d8" stroke-width="1.4" stroke-linecap="round"/><circle cx="369.3" cy="40.3" r="7" fill="#f4f4f0" stroke="#c8c8c0" stroke-width="0.8"/><circle cx="369.3" cy="40.3" r="5.4" fill="url(#lens2)" stroke="#5a86c8" stroke-width="0.7"/><path d="M414.7 37.3 L414.7 51.7 L428 51.7 L422.7 46.3 C426 42.5 429 40.5 432 40.5 C436 40.5 438.2 43.5 438.2 46 C438.2 50.5 433 55 427 56.6 L428 58 C437 57.2 442.6 51.5 442.6 45 C442.6 38.5 437.5 33.8 431.5 33.8 C426.5 33.8 422 36.5 418.5 41.3 Z" fill="url(#grn)" stroke="#1f8030" stroke-width="0.9"/><g transform="translate(904.2 0) scale(-1 1)"><path d="M414.7 37.3 L414.7 51.7 L428 51.7 L422.7 46.3 C426 42.5 429 40.5 432 40.5 C436 40.5 438.2 43.5 438.2 46 C438.2 50.5 433 55 427 56.6 L428 58 C437 57.2 442.6 51.5 442.6 45 C442.6 38.5 437.5 33.8 431.5 33.8 C426.5 33.8 422 36.5 418.5 41.3 Z" fill="url(#grn2)" stroke="#6fb080" stroke-width="0.9"/></g><rect x="502.1" y="26.0" width="1.1" height="1.1" fill="#5c5c5c"/><rect x="502.1" y="29.0" width="1.1" height="1.1" fill="#5c5c5c"/><rect x="502.1" y="32.0" width="1.1" height="1.1" fill="#5c5c5c"/><rect x="502.1" y="35.0" width="1.1" height="1.1" fill="#5c5c5c"/><rect x="502.1" y="38.0" width="1.1" height="1.1" fill="#5c5c5c"/><rect x="502.1" y="41.0" width="1.1" height="1.1" fill="#5c5c5c"/><rect x="502.1" y="44.0" width="1.1" height="1.1" fill="#5c5c5c"/><rect x="502.1" y="47.0" width="1.1" height="1.1" fill="#5c5c5c"/><rect x="502.1" y="50.0" width="1.1" height="1.1" fill="#5c5c5c"/><rect x="502.1" y="53.0" width="1.1" height="1.1" fill="#5c5c5c"/><rect x="502.1" y="56.0" width="1.1" height="1.1" fill="#5c5c5c"/><rect x="502.1" y="59.0" width="1.1" height="1.1" fill="#5c5c5c"/><rect x="502.1" y="62.0" width="1.1" height="1.1" fill="#5c5c5c"/><rect x="502.1" y="65.0" width="1.1" height="1.1" fill="#5c5c5c"/><ellipse cx="532" cy="57.5" rx="12" ry="1.5" fill="#d8d8d8"/><g transform="rotate(-45 531 45.5)"><rect x="516" y="41.5" width="30" height="9" rx="1" fill="#e07a7a" stroke="#c26060" stroke-width="0.8"/><rect x="516" y="41.5" width="8" height="9" fill="#f2f2f2" stroke="#aaa" stroke-width="0.8"/><rect x="525" y="44" width="21" height="3" fill="#eeeeee" opacity="0.9"/></g><rect x="558.1" y="26.0" width="1.1" height="1.1" fill="#5c5c5c"/><rect x="558.1" y="29.0" width="1.1" height="1.1" fill="#5c5c5c"/><rect x="558.1" y="32.0" width="1.1" height="1.1" fill="#5c5c5c"/><rect x="558.1" y="35.0" width="1.1" height="1.1" fill="#5c5c5c"/><rect x="558.1" y="38.0" width="1.1" height="1.1" fill="#5c5c5c"/><rect x="558.1" y="41.0" width="1.1" height="1.1" fill="#5c5c5c"/><rect x="558.1" y="44.0" width="1.1" height="1.1" fill="#5c5c5c"/><rect x="558.1" y="47.0" width="1.1" height="1.1" fill="#5c5c5c"/><rect x="558.1" y="50.0" width="1.1" height="1.1" fill="#5c5c5c"/><rect x="558.1" y="53.0" width="1.1" height="1.1" fill="#5c5c5c"/><rect x="558.1" y="56.0" width="1.1" height="1.1" fill="#5c5c5c"/><rect x="558.1" y="59.0" width="1.1" height="1.1" fill="#5c5c5c"/><rect x="558.1" y="62.0" width="1.1" height="1.1" fill="#5c5c5c"/><rect x="558.1" y="65.0" width="1.1" height="1.1" fill="#5c5c5c"/><path d="M587 31.6 L590 31.8 L590.2 47 L588.5 47.5 Z" fill="#fafafa" stroke="#9a9a9a" stroke-width="0.8"/><path d="M589 46 L600.3 37.8 L600.8 40.2 L590 47.5 Z" fill="#fafafa" stroke="#9a9a9a" stroke-width="0.8"/><ellipse cx="579.5" cy="48" rx="5.6" ry="3.5" transform="rotate(-25 579.5 48)" fill="none" stroke="#e58888" stroke-width="2.6"/><ellipse cx="589.4" cy="55" rx="3.2" ry="5.6" fill="none" stroke="#e58888" stroke-width="2.6"/><path d="M584 46.5 L588.5 49" stroke="#e58888" stroke-width="2.5"/><path d="M573.5 57.3 H579.7 M576.6 54.2 V60.4" stroke="#333" stroke-width="1"/><path d="M618.5 30.5 H638 Q639.8 30.5 639.8 32.3 V55.4 H618.5 Z" fill="#f2f2f2" stroke="#d2d2d2" stroke-width="0.8"/><path d="M622 38 H628 M622 40.7 H628 M622 43.4 H628 M622 46 H628" stroke="#ddd" stroke-width="1"/><path d="M626.6 36.5 H646 Q647.7 36.5 647.7 38.3 V57.5 L643.7 61.5 H626.6 Z" fill="url(#pap)" stroke="#c0c0c0" stroke-width="0.8"/><path d="M643.7 61.5 V57.5 H647.7 Z" fill="#c8c8c8"/><path d="M631 43.4 H644 M631 46 H644 M631 48.5 H642 M631 51 H644" stroke="#cfcfcf" stroke-width="1"/><path d="M618.8 56.8 H625 M621.9 53.7 V59.9" stroke="#333" stroke-width="1"/><rect x="665.6" y="32.6" width="26.3" height="28" rx="1.5" fill="#c08a2a" stroke="#a06c14" stroke-width="1"/><path d="M668.7 34.4 H689.3 V54.5 L685.7 58.2 H668.7 Z" fill="url(#pap)"/><path d="M685.7 58.2 V54.5 H689.3 Z" fill="#b8b8b8"/><path d="M672 40.6 H686 M672 43.4 H686 M672 46 H684 M672 48.6 H686 M672 51.2 H681" stroke="#c8c8c8" stroke-width="1"/><path d="M672.5 37.5 V33.5 H675.5 V30.2 H682 V33.5 H685 V37.5 Z" fill="#8c8c80" stroke="#6a6a60" stroke-width="0.8"/><path d="M723 56.3 H745" stroke="#e8141e" stroke-width="1.4"/><path d="M724.5 53.8 L727 47.5 L740 35.5 L744.5 39.5 L731.5 51.8 Z" fill="#e0321e" stroke="#8a2010" stroke-width="0.9"/><path d="M724.5 53.8 L727 47.5 L731.5 51.8 Z" fill="#f0c8a0"/><path d="M724.5 53.8 L725.6 51 L727.2 52.7 Z" fill="#333"/><path d="M738.3 37.2 L742.6 41" stroke="#f0c0c0" stroke-width="1.6"/><rect x="765.8" y="35.6" width="28.6" height="21.6" fill="#000080" stroke="#1a1a40" stroke-width="0.9"/><path d="M769.5 54 L791 40 V54 Z" fill="none" stroke="#e8e8ff" stroke-width="1" stroke-dasharray="2.2 1.3"/><rect x="805" y="24.8" width="42.799999999999955" height="43.2" rx="5" fill="#b6b6b6"/><circle cx="825.8" cy="45.8" r="12.8" fill="none" stroke="#111" stroke-width="1.9"/><path d="M812 59.5 L840 31.8" stroke="#2020e0" stroke-width="1.2"/><rect x="854.0" y="26.0" width="1.1" height="1.1" fill="#5c5c5c"/><rect x="854.0" y="29.0" width="1.1" height="1.1" fill="#5c5c5c"/><rect x="854.0" y="32.0" width="1.1" height="1.1" fill="#5c5c5c"/><rect x="854.0" y="35.0" width="1.1" height="1.1" fill="#5c5c5c"/><rect x="854.0" y="38.0" width="1.1" height="1.1" fill="#5c5c5c"/><rect x="854.0" y="41.0" width="1.1" height="1.1" fill="#5c5c5c"/><rect x="854.0" y="44.0" width="1.1" height="1.1" fill="#5c5c5c"/><rect x="854.0" y="47.0" width="1.1" height="1.1" fill="#5c5c5c"/><rect x="854.0" y="50.0" width="1.1" height="1.1" fill="#5c5c5c"/><rect x="854.0" y="53.0" width="1.1" height="1.1" fill="#5c5c5c"/><rect x="854.0" y="56.0" width="1.1" height="1.1" fill="#5c5c5c"/><rect x="854.0" y="59.0" width="1.1" height="1.1" fill="#5c5c5c"/><rect x="854.0" y="62.0" width="1.1" height="1.1" fill="#5c5c5c"/><rect x="854.0" y="65.0" width="1.1" height="1.1" fill="#5c5c5c"/><rect x="862" y="24.8" width="42.700000000000045" height="43.2" rx="5" fill="#b6b6b6"/><rect x="870.3" y="33.5" width="1.6" height="1.6" fill="#111"/><rect x="870.3" y="41.5" width="1.6" height="1.6" fill="#111"/><rect x="870.3" y="49.5" width="1.6" height="1.6" fill="#111"/><rect x="870.3" y="57.5" width="1.6" height="1.6" fill="#111"/><rect x="878.3" y="33.5" width="1.6" height="1.6" fill="#111"/><rect x="878.3" y="41.5" width="1.6" height="1.6" fill="#111"/><rect x="878.3" y="49.5" width="1.6" height="1.6" fill="#111"/><rect x="878.3" y="57.5" width="1.6" height="1.6" fill="#111"/><rect x="886.3" y="33.5" width="1.6" height="1.6" fill="#111"/><rect x="886.3" y="41.5" width="1.6" height="1.6" fill="#111"/><rect x="886.3" y="49.5" width="1.6" height="1.6" fill="#111"/><rect x="886.3" y="57.5" width="1.6" height="1.6" fill="#111"/><rect x="894.3" y="33.5" width="1.6" height="1.6" fill="#111"/><rect x="894.3" y="41.5" width="1.6" height="1.6" fill="#111"/><rect x="894.3" y="49.5" width="1.6" height="1.6" fill="#111"/><rect x="894.3" y="57.5" width="1.6" height="1.6" fill="#111"/><rect x="910.8" y="26.0" width="1.1" height="1.1" fill="#5c5c5c"/><rect x="910.8" y="29.0" width="1.1" height="1.1" fill="#5c5c5c"/><rect x="910.8" y="32.0" width="1.1" height="1.1" fill="#5c5c5c"/><rect x="910.8" y="35.0" width="1.1" height="1.1" fill="#5c5c5c"/><rect x="910.8" y="38.0" width="1.1" height="1.1" fill="#5c5c5c"/><rect x="910.8" y="41.0" width="1.1" height="1.1" fill="#5c5c5c"/><rect x="910.8" y="44.0" width="1.1" height="1.1" fill="#5c5c5c"/><rect x="910.8" y="47.0" width="1.1" height="1.1" fill="#5c5c5c"/><rect x="910.8" y="50.0" width="1.1" height="1.1" fill="#5c5c5c"/><rect x="910.8" y="53.0" width="1.1" height="1.1" fill="#5c5c5c"/><rect x="910.8" y="56.0" width="1.1" height="1.1" fill="#5c5c5c"/><rect x="910.8" y="59.0" width="1.1" height="1.1" fill="#5c5c5c"/><rect x="910.8" y="62.0" width="1.1" height="1.1" fill="#5c5c5c"/><rect x="910.8" y="65.0" width="1.1" height="1.1" fill="#5c5c5c"/><g><ellipse cx="938" cy="57.5" rx="10" ry="2" fill="#000" opacity="0.06"/><path d="M945.3 50.8 L952.3 57.6" stroke="#5e5e5e" stroke-width="4.6" stroke-linecap="round"/><path d="M945.6 50.4 L952 56.6" stroke="#9a9a9a" stroke-width="1.2"/><circle cx="936" cy="41.7" r="11.3" fill="#f2f2ec" stroke="#c4c4ba" stroke-width="1"/><circle cx="936" cy="41.7" r="9.5" fill="url(#lens2)" stroke="#8aa4c8" stroke-width="0.6"/><path d="M930.5 41.7 H941.5 M936 36.2 V47.2" stroke="#2a5aa8" stroke-width="4"/><path d="M931 41.7 H941 M936 36.7 V46.7" stroke="#fff" stroke-width="2.6"/></g><g><ellipse cx="984.2" cy="57.5" rx="10" ry="2" fill="#000" opacity="0.06"/><path d="M991.5 50.8 L998.5 57.6" stroke="#5e5e5e" stroke-width="4.6" stroke-linecap="round"/><path d="M991.8000000000001 50.4 L998.2 56.6" stroke="#9a9a9a" stroke-width="1.2"/><circle cx="982.2" cy="41.7" r="11.3" fill="#f2f2ec" stroke="#c4c4ba" stroke-width="1"/><circle cx="982.2" cy="41.7" r="9.5" fill="url(#lens2)" stroke="#8aa4c8" stroke-width="0.6"/><path d="M976.2 41.7 H988.2" stroke="#2a5aa8" stroke-width="3.8"/><path d="M976.7 41.7 H987.7" stroke="#fff" stroke-width="2.4"/></g><g><ellipse cx="1030.4" cy="57.5" rx="10" ry="2" fill="#000" opacity="0.06"/><path d="M1037.7 50.8 L1044.7 57.6" stroke="#5e5e5e" stroke-width="4.6" stroke-linecap="round"/><path d="M1038.0 50.4 L1044.4 56.6" stroke="#9a9a9a" stroke-width="1.2"/><circle cx="1028.4" cy="41.7" r="11.3" fill="#f2f2ec" stroke="#c4c4ba" stroke-width="1"/><circle cx="1028.4" cy="41.7" r="9.5" fill="url(#lens2)" stroke="#8aa4c8" stroke-width="0.6"/><path d="M1023.4000000000001 40.2 V36.7 H1026.9 M1029.9 36.7 H1033.4 V40.2 M1033.4 43.2 V46.7 H1029.9 M1026.9 46.7 H1023.4000000000001 V43.2" fill="none" stroke="#2a5aa8" stroke-width="3.4"/><path d="M1023.4000000000001 40.2 V36.7 H1026.9 M1029.9 36.7 H1033.4 V40.2 M1033.4 43.2 V46.7 H1029.9 M1026.9 46.7 H1023.4000000000001 V43.2" fill="none" stroke="#fff" stroke-width="2"/></g><g opacity="0.5"><ellipse cx="1076.6" cy="57.5" rx="10" ry="2" fill="#000" opacity="0.06"/><path d="M1083.8999999999999 50.8 L1090.8999999999999 57.6" stroke="#5e5e5e" stroke-width="4.6" stroke-linecap="round"/><path d="M1084.1999999999998 50.4 L1090.6 56.6" stroke="#9a9a9a" stroke-width="1.2"/><circle cx="1074.6" cy="41.7" r="11.3" fill="#f2f2ec" stroke="#c4c4ba" stroke-width="1"/><circle cx="1074.6" cy="41.7" r="9.5" fill="url(#lens2)" stroke="#8aa4c8" stroke-width="0.6"/><path d="M1069.6 40.2 V36.7 H1073.1 M1076.1 36.7 H1079.6 V40.2 M1079.6 43.2 V46.7 H1076.1 M1073.1 46.7 H1069.6 V43.2" fill="none" stroke="#c04040" stroke-width="3.4"/><path d="M1069.6 40.2 V36.7 H1073.1 M1076.1 36.7 H1079.6 V40.2 M1079.6 43.2 V46.7 H1076.1 M1073.1 46.7 H1069.6 V43.2" fill="none" stroke="#f05050" stroke-width="2"/></g><g><ellipse cx="1122" cy="57.5" rx="10" ry="2" fill="#000" opacity="0.06"/><path d="M1129.3 50.8 L1136.3 57.6" stroke="#5e5e5e" stroke-width="4.6" stroke-linecap="round"/><path d="M1129.6 50.4 L1136 56.6" stroke="#9a9a9a" stroke-width="1.2"/><circle cx="1120" cy="41.7" r="11.3" fill="#f2f2ec" stroke="#c4c4ba" stroke-width="1"/><circle cx="1120" cy="41.7" r="9.5" fill="url(#lens2)" stroke="#8aa4c8" stroke-width="0.6"/><path d="M1113 41.7 L1119 36 V40.3 H1127.5 V43.9 H1119 V47.4 Z" fill="#fff" stroke="#2a5aa8" stroke-width="0.9"/></g><rect x="1154.5" y="30.5" width="27" height="18" rx="1" fill="#fff" stroke="#5a88d0" stroke-width="1"/><ellipse cx="1170" cy="57.5" rx="9" ry="1.8" fill="#000" opacity="0.06"/><path d="M1175 52 L1181.5 58" stroke="#5e5e5e" stroke-width="4.4" stroke-linecap="round"/><circle cx="1168.2" cy="45" r="9.6" fill="#f2f2ec" stroke="#c4c4ba" stroke-width="1"/><circle cx="1168.2" cy="45" r="7.9" fill="url(#lens2)"/><ellipse cx="1215" cy="57.5" rx="10" ry="2" fill="#000" opacity="0.06"/><path d="M1222.5 51.5 L1229 58" stroke="#5e5e5e" stroke-width="4.4" stroke-linecap="round"/><circle cx="1213" cy="43.1" r="11.3" fill="#f2f2ec" stroke="#c4c4ba" stroke-width="1"/><circle cx="1213" cy="43.1" r="9.6" fill="url(#lens2)"/><path d="M1213.00 30.20 L1216.00 35.00 L1214.30 35.00 L1214.30 41.80 L1221.10 41.80 L1221.10 40.10 L1225.90 43.10 L1221.10 46.10 L1221.10 44.40 L1214.30 44.40 L1214.30 51.20 L1216.00 51.20 L1213.00 56.00 L1210.00 51.20 L1211.70 51.20 L1211.70 44.40 L1204.90 44.40 L1204.90 46.10 L1200.10 43.10 L1204.90 40.10 L1204.90 41.80 L1211.70 41.80 L1211.70 35.00 L1210.00 35.00 Z" fill="#fff" stroke="#4a7cd0" stroke-width="0.8" stroke-linejoin="miter"/><rect x="7" y="77" width="2.2" height="2.2" fill="#9a9a9a"/><rect x="7" y="83" width="2.2" height="2.2" fill="#9a9a9a"/><rect x="7" y="89" width="2.2" height="2.2" fill="#9a9a9a"/><rect x="7" y="95" width="2.2" height="2.2" fill="#9a9a9a"/><rect x="15" y="73" width="42.5" height="31.2" rx="6" fill="url(#pg)" stroke="#8c8c8c" stroke-width="2.2"/><path d="M31 79 V93.5 L34.3 90.3 L37 96.5 L39.6 95.3 L37 89.3 L41.4 89.3 Z" fill="#fff" stroke="#444" stroke-width="1" stroke-linejoin="round"/><rect x="67" y="71" width="1" height="1" fill="#555"/><rect x="67" y="74" width="1" height="1" fill="#555"/><rect x="67" y="77" width="1" height="1" fill="#555"/><rect x="67" y="80" width="1" height="1" fill="#555"/><rect x="67" y="83" width="1" height="1" fill="#555"/><rect x="67" y="86" width="1" height="1" fill="#555"/><rect x="67" y="89" width="1" height="1" fill="#555"/><rect x="67" y="92" width="1" height="1" fill="#555"/><rect x="67" y="95" width="1" height="1" fill="#555"/><rect x="67" y="98" width="1" height="1" fill="#555"/><rect x="67" y="101" width="1" height="1" fill="#555"/><rect x="67" y="104" width="1" height="1" fill="#555"/></svg>
<svg style="left:0;top:0" width="1500" height="844"><defs><linearGradient id="btg" x1="0" y1="0" x2="0" y2="1"><stop offset="0" stop-color="#f9f9f9"/><stop offset="0.3" stop-color="#e9e9e9"/><stop offset="0.7" stop-color="#efefef"/><stop offset="1" stop-color="#f6f6f6"/></linearGradient>
<pattern id="hatch" width="2.6" height="2.6" patternUnits="userSpaceOnUse" patternTransform="rotate(45)"><rect width="2.6" height="2.6" fill="#ececec"/><line x1="0.5" y1="0" x2="0.5" y2="2.6" stroke="#444" stroke-width="0.9"/></pattern>
<linearGradient id="dkbar" x1="0" y1="0" x2="0" y2="1"><stop offset="0" stop-color="#efefef"/><stop offset="1" stop-color="#dcdcdc"/></linearGradient>
</defs><rect x="6.5" y="116" width="2" height="2" fill="#a8a8a8"/><rect x="12.5" y="116" width="2" height="2" fill="#a8a8a8"/><rect x="18.5" y="116" width="2" height="2" fill="#a8a8a8"/><rect x="24.5" y="116" width="2" height="2" fill="#a8a8a8"/><rect x="30.5" y="116" width="2" height="2" fill="#a8a8a8"/><rect x="36.5" y="116" width="2" height="2" fill="#a8a8a8"/><rect x="42.5" y="116" width="2" height="2" fill="#a8a8a8"/><rect x="48.5" y="116" width="2" height="2" fill="#a8a8a8"/><rect x="54.5" y="116" width="2" height="2" fill="#a8a8a8"/><rect x="60.5" y="116" width="2" height="2" fill="#a8a8a8"/><rect x="1.8" y="122.5" width="33.7" height="34" fill="url(#btg)" stroke="#979797" stroke-width="1.3"/><rect x="36.5" y="122.5" width="33.599999999999994" height="34" fill="url(#btg)" stroke="#979797" stroke-width="1.3"/><rect x="1.8" y="157.5" width="33.7" height="34" fill="url(#btg)" stroke="#979797" stroke-width="1.3"/><rect x="36.5" y="157.5" width="33.599999999999994" height="34" fill="url(#btg)" stroke="#979797" stroke-width="1.3"/><rect x="1.8" y="192.5" width="33.7" height="33.599999999999994" fill="url(#btg)" stroke="#979797" stroke-width="1.3"/><rect x="36.5" y="192.5" width="33.599999999999994" height="33.599999999999994" fill="url(#btg)" stroke="#979797" stroke-width="1.3"/><rect x="1.8" y="227.1" width="33.7" height="33.79999999999998" fill="url(#btg)" stroke="#979797" stroke-width="1.3"/><rect x="36.5" y="227.1" width="33.599999999999994" height="33.79999999999998" fill="url(#btg)" stroke="#979797" stroke-width="1.3"/><rect x="1.8" y="262.9" width="33.7" height="33.60000000000002" fill="url(#btg)" stroke="#979797" stroke-width="1.3"/><rect x="1.8" y="305.5" width="33.7" height="34" fill="url(#btg)" stroke="#979797" stroke-width="1.3"/><rect x="36.5" y="305.5" width="33.599999999999994" height="34" fill="url(#btg)" stroke="#979797" stroke-width="1.3"/><rect x="1.8" y="340.8" width="33.7" height="33.5" fill="url(#btg)" stroke="#979797" stroke-width="1.3"/><rect x="1.8" y="384.3" width="33.7" height="33.39999999999998" fill="url(#btg)" stroke="#979797" stroke-width="1.3"/><rect x="36.5" y="384.3" width="33.599999999999994" height="33.39999999999998" fill="url(#btg)" stroke="#979797" stroke-width="1.3"/><rect x="1.8" y="418.7" width="33.7" height="33.400000000000034" fill="url(#btg)" stroke="#979797" stroke-width="1.3"/><rect x="36.5" y="418.7" width="33.599999999999994" height="33.400000000000034" fill="url(#btg)" stroke="#979797" stroke-width="1.3"/><rect x="1.8" y="461.5" width="33.7" height="33.39999999999998" fill="url(#btg)" stroke="#979797" stroke-width="1.3"/><path d="M8.0 131.5 H15.0 M11.5 128.0 V135.0" stroke="#111" stroke-width="1.2"/><path d="M21.9 140.4 H28.9 M25.4 136.9 V143.9" stroke="#111" stroke-width="1.2"/><path d="M8.8 146.4 H15.8 M12.3 142.9 V149.9" stroke="#111" stroke-width="1.2"/><path d="M26.5 152 H31 V147.5 Z" fill="#000"/><path d="M42 144.7 L65.2 134.2" stroke="#111" stroke-width="1.2"/><path d="M61.099999999999994 152 H65.6 V147.5 Z" fill="#000"/><path d="M7.6 183 A20 20 0 0 1 27.4 163.3" fill="none" stroke="#111" stroke-width="1.2"/><path d="M26.5 187 H31 V182.5 Z" fill="#000"/><circle cx="52.2" cy="173.5" r="9.6" fill="none" stroke="#111" stroke-width="1.2"/><path d="M61.099999999999994 187 H65.6 V182.5 Z" fill="#000"/><ellipse cx="17.8" cy="208.7" rx="13" ry="5.6" transform="rotate(-40 17.8 208.7)" fill="none" stroke="#111" stroke-width="1.2"/><path d="M26.5 221.6 H31 V217.1 Z" fill="#000"/><path d="M42.5 201 C41 206 45 219 48.5 218.5 C52 218 54 206 57.5 201.5 C60 198.5 64 199.5 64 204 C64 209 60 210.5 56 208.5 C52 206.5 46 202 42.5 201 Z" fill="none" stroke="#111" stroke-width="1.2"/><path d="M61.099999999999994 221.6 H65.6 V217.1 Z" fill="#000"/><path d="M14.8 238.6 C10 239.5 7.8 246 14 247.4 H27.5" fill="none" stroke="#111" stroke-width="1.2"/><path d="M26.5 256.4 H31 V251.89999999999998 Z" fill="#000"/><path d="M43.8 231.9 H50.9 L54.5 238.1 L50.9 244.3 H43.8 L40.2 238.1 Z" fill="none" stroke="#111" stroke-width="1.1"/><path d="M60.3 236.5 L65.5 245.3 H55.3 Z" fill="none" stroke="#111" stroke-width="1.1"/><rect x="41.2" y="248.9" width="14.4" height="6.7" fill="none" stroke="#111" stroke-width="1.1"/><path d="M61.099999999999994 256.4 H65.6 V251.89999999999998 Z" fill="#000"/><path d="M7.4 278.5 L13.3 272.2 H28.5 V286 H7.4 Z" fill="url(#hatch)" stroke="#111" stroke-width="1.1"/><circle cx="20.5" cy="280" r="2.9" fill="#f4f4f4" stroke="#111" stroke-width="1"/><path d="M26.5 292 H31 V287.5 Z" fill="#000"/><text x="17.8" y="331.6" font-family="Liberation Serif" font-size="26.5" text-anchor="middle" fill="#111">A</text><path d="M43.4 315 V329.7 M61.5 315 V329.7 M43.8 316.8 H61" stroke="#111" stroke-width="1.2"/><path d="M43.6 316.8 L47.5 314.8 V318.8 Z M61.3 316.8 L57.4 314.8 V318.8 Z" fill="#111"/><path d="M61.099999999999994 335 H65.6 V330.5 Z" fill="#000"/><rect x="7" y="348.5" width="22.2" height="16.8" fill="#fff" stroke="#111" stroke-width="1.2"/><rect x="9" y="350.5" width="18.2" height="12.8" fill="#fff" stroke="#111" stroke-width="0.8"/><path d="M9.5 362.8 L13.5 357 L16.5 359 L20 354.5 L26.8 362.8 Z" fill="#111"/><circle cx="24.2" cy="353.2" r="1.6" fill="#111"/><path d="M5.5 393.6 V412 H24.4 Z" fill="#fafafa" stroke="#111" stroke-width="1.1"/><path d="M8.5 404 V409 H13.5 Z" fill="none" stroke="#111" stroke-width="1"/><path d="M9.5 389 L19.5 397.5 L18 399.2 L8 390.6 Z" fill="#e03020" stroke="#7a2010" stroke-width="0.7"/><path d="M26.3 387.3 L23.5 405.3 M26.3 387.3 L29.2 405.3" stroke="#111" stroke-width="1.3"/><circle cx="26.3" cy="388.5" r="1" fill="#111"/><path d="M26.5 413.2 H31 V408.7 Z" fill="#000"/><rect x="41" y="395.5" width="24" height="8.2" rx="1.5" fill="#fbfbfb" stroke="#444" stroke-width="1"/><path d="M44 395.8 V398 M46.5 395.8 V397.3 M49 395.8 V398.5 M51.5 395.8 V397.3 M54 395.8 V398 M56.5 395.8 V397.3 M59 395.8 V398.5 M61.5 395.8 V397.3" stroke="#444" stroke-width="0.7"/><rect x="7.8" y="425.2" width="16.6" height="12.3" fill="#f2eedc" stroke="#b8b4a0" stroke-width="1"/><circle cx="22" cy="436.6" r="6.8" fill="#eee8c8" fill-opacity="0.8" stroke="#c0b890" stroke-width="1"/><circle cx="7.4" cy="438" r="1.1" fill="#f06060"/><path d="M41.6 433.6 L58.6 423.9" stroke="#e82020" stroke-width="1.2"/><path d="M51.8 428.7 V441 L54.6 438.4 L56.8 443.2 L58.6 442.4 L56.4 437.8 L60 437.6 Z" fill="#fff" stroke="#555" stroke-width="0.9" stroke-linejoin="round"/><path d="M61.099999999999994 447.6 H65.6 V443.1 Z" fill="#000"/><path d="M7.4 473 L20 467.5 L28.5 472.4 V483.5 L16 489.5 L7.4 484 Z M7.4 473 L16 478.3 L28.5 472.4 M16 478.3 V489.5" fill="none" stroke="#111" stroke-width="1.1" stroke-linejoin="round"/><path d="M26.5 490.4 H31 V485.9 Z" fill="#000"/></svg>
<svg style="left:0;top:0" width="1500" height="844"><defs><linearGradient id="lbg" x1="0" y1="0" x2="0" y2="1"><stop offset="0" stop-color="#f0f0f0"/><stop offset="1" stop-color="#f8f8f8"/></linearGradient>
<linearGradient id="pen" x1="0" y1="0" x2="1" y2="0"><stop offset="0" stop-color="#f0c060"/><stop offset="1" stop-color="#b88a30"/></linearGradient></defs><circle cx="1164" cy="118" r="7" fill="#6e6e6e"/><path d="M1160.8 114.8 L1167.2 121.2 M1167.2 114.8 L1160.8 121.2" stroke="#fff" stroke-width="1.8"/><circle cx="1182" cy="118" r="7" fill="#6e6e6e"/><rect x="1180" y="114.6" width="5" height="4" fill="none" stroke="#fff" stroke-width="1"/><rect x="1178.5" y="117.2" width="5" height="4" fill="#6e6e6e" stroke="#fff" stroke-width="1"/><rect x="1155" y="130" width="299.6" height="27" fill="#a8a8a8"/><rect x="1156.6" y="131.3" width="57.7" height="23.4" fill="url(#lbg)"/><rect x="1216.5" y="131.3" width="57.7" height="23.4" fill="url(#lbg)"/><rect x="1276.5" y="131.3" width="57.7" height="23.4" fill="url(#lbg)"/><rect x="1336.5" y="131.3" width="57.2" height="23.4" fill="url(#lbg)"/><rect x="1396.8" y="131.3" width="57.5" height="23.4" fill="url(#lbg)"/><g transform="translate(1185 142.6) scale(1.0)"><path d="M-7.6 0.6 C-6.5 -5.4 6.5 -5.4 7.6 0.6 C6.5 5.6 -6.5 5.6 -7.6 0.6 Z" fill="#000"/><ellipse cx="0" cy="1" rx="4.9" ry="3.3" fill="#fff"/><circle cx="0" cy="-0.1" r="2.9" fill="#000"/><circle cx="-0.7" cy="-1" r="0.7" fill="#fff" opacity="0.7"/></g><g transform="translate(1245 142.6) scale(1.0)"><path d="M-7.6 0.6 C-6.5 -5.4 6.5 -5.4 7.6 0.6 C6.5 5.6 -6.5 5.6 -7.6 0.6 Z" fill="#a0a0a0"/><ellipse cx="0" cy="1" rx="4.9" ry="3.3" fill="#fff"/><circle cx="0" cy="-0.1" r="2.9" fill="#a0a0a0"/><circle cx="-0.7" cy="-1" r="0.7" fill="#fff" opacity="0.7"/></g><path d="M1305 137 V148 M1299.5 142.5 H1310.5" stroke="#3a0000" stroke-width="3.8"/><path d="M1305 137 V148 M1299.5 142.5 H1310.5" stroke="#f00000" stroke-width="2.6"/><rect x="1359.2" y="141.2" width="11.6" height="3.5" fill="#f00000" stroke="#4a1010" stroke-width="0.7"/><path d="M1418.5 149.5 L1431.5 136.5" stroke="#6a4a10" stroke-width="3.2" stroke-linecap="butt"/><path d="M1418.5 149.5 L1431.5 136.5" stroke="url(#pen)" stroke-width="2.2"/><path d="M1429.16 138.84 L1431.5 136.5" stroke="#e82020" stroke-width="2.8"/><path d="M1418.5 149.5 L1420.45 147.55" stroke="#e8d8b0" stroke-width="2.4"/><circle cx="1419.0" cy="149.0" r="0.9" fill="#333"/><rect x="1161.5" y="163.5" width="15.5" height="8" fill="#fff" stroke="#000" stroke-width="1"/><text x="1182.5" y="172.3" font-size="13" fill="#111" font-family="Liberation Sans">0</text><path d="M1395.2 173.2 L1407 161.4" stroke="#6a4a10" stroke-width="3.2" stroke-linecap="butt"/><path d="M1395.2 173.2 L1407 161.4" stroke="url(#pen)" stroke-width="2.2"/><path d="M1404.876 163.524 L1407 161.4" stroke="#e82020" stroke-width="2.8"/><path d="M1395.2 173.2 L1396.97 171.42999999999998" stroke="#e8d8b0" stroke-width="2.4"/><circle cx="1395.7" cy="172.7" r="0.9" fill="#333"/><g transform="translate(1423 166.5) scale(1.0)"><path d="M-7.6 0.6 C-6.5 -5.4 6.5 -5.4 7.6 0.6 C6.5 5.6 -6.5 5.6 -7.6 0.6 Z" fill="#000"/><ellipse cx="0" cy="1" rx="4.9" ry="3.3" fill="#fff"/><circle cx="0" cy="-0.1" r="2.9" fill="#000"/><circle cx="-0.7" cy="-1" r="0.7" fill="#fff" opacity="0.7"/></g><path d="M1441.8 166 V163.8 A3.4 3.4 0 0 1 1448.6 163.8 V166" fill="none" stroke="#bdbdbd" stroke-width="1.3"/><rect x="1440.4" y="166" width="9.6" height="7.8" fill="#bdbdbd"/><rect x="1462" y="116" width="2" height="2" fill="#a8a8a8"/><rect x="1468" y="116" width="2" height="2" fill="#a8a8a8"/><rect x="1474" y="116" width="2" height="2" fill="#a8a8a8"/><rect x="1480" y="116" width="2" height="2" fill="#a8a8a8"/><rect x="1486" y="116" width="2" height="2" fill="#a8a8a8"/><rect x="1462" y="260.5" width="2" height="2" fill="#a8a8a8"/><rect x="1462" y="408" width="2" height="2" fill="#a8a8a8"/><rect x="1468" y="260.5" width="2" height="2" fill="#a8a8a8"/><rect x="1468" y="408" width="2" height="2" fill="#a8a8a8"/><rect x="1474" y="260.5" width="2" height="2" fill="#a8a8a8"/><rect x="1474" y="408" width="2" height="2" fill="#a8a8a8"/><rect x="1480" y="260.5" width="2" height="2" fill="#a8a8a8"/><rect x="1480" y="408" width="2" height="2" fill="#a8a8a8"/><rect x="1486" y="260.5" width="2" height="2" fill="#a8a8a8"/><rect x="1486" y="408" width="2" height="2" fill="#a8a8a8"/><rect x="1456" y="120.5" width="43" height="42" rx="6" fill="#b6b6b6"/><rect x="1456" y="417" width="43" height="42" rx="6" fill="#b6b6b6"/><rect x="1463.5" y="127.5" width="27.5" height="27.5" fill="#fff" stroke="#222" stroke-width="1"/><rect x="1463.5" y="127.5" width="27.5" height="3.5" fill="#000"/><rect x="1465" y="128.3" width="2.2" height="2.2" fill="#fff"/><rect x="1463.5" y="174.5" width="27.5" height="27.5" fill="#fff" stroke="#222" stroke-width="1"/><rect x="1463.5" y="174.5" width="27.5" height="3.5" fill="#000"/><rect x="1465" y="175.3" width="2.2" height="2.2" fill="#fff"/><rect x="1463.5" y="220.5" width="27.5" height="27.5" fill="#fff" stroke="#222" stroke-width="1"/><rect x="1463.5" y="220.5" width="27.5" height="3.5" fill="#000"/><rect x="1465" y="221.3" width="2.2" height="2.2" fill="#fff"/><rect x="1463.5" y="276.5" width="27.5" height="27.5" fill="#fff" stroke="#222" stroke-width="1"/><rect x="1463.5" y="276.5" width="27.5" height="3.5" fill="#000"/><rect x="1465" y="277.3" width="2.2" height="2.2" fill="#fff"/><rect x="1463.5" y="322.5" width="27.5" height="27.5" fill="#fff" stroke="#222" stroke-width="1"/><rect x="1463.5" y="322.5" width="27.5" height="3.5" fill="#000"/><rect x="1465" y="323.3" width="2.2" height="2.2" fill="#fff"/><rect x="1463.5" y="368.5" width="27.5" height="27.5" fill="#fff" stroke="#222" stroke-width="1"/><rect x="1463.5" y="368.5" width="27.5" height="3.5" fill="#000"/><rect x="1465" y="369.3" width="2.2" height="2.2" fill="#fff"/><rect x="1463.5" y="424.5" width="27.5" height="27.5" fill="#fff" stroke="#222" stroke-width="1"/><rect x="1463.5" y="424.5" width="27.5" height="3.5" fill="#000"/><rect x="1465" y="425.3" width="2.2" height="2.2" fill="#fff"/><rect x="1463.5" y="471.5" width="27.5" height="27.5" fill="#fff" stroke="#222" stroke-width="1"/><rect x="1463.5" y="471.5" width="27.5" height="3.5" fill="#000"/><rect x="1465" y="472.3" width="2.2" height="2.2" fill="#fff"/><path d="M1472 137 L1480 135 V149 L1472 151 Z" fill="#777" stroke="#444" stroke-width="0.7"/><path d="M1475 136 L1485 133.5 V148 L1475 150.5 Z" fill="#fff" stroke="#555" stroke-width="0.8"/><path d="M1477 147 L1482 138 L1483 146 Z" fill="none" stroke="#e03030" stroke-width="0.8"/><rect x="1469" y="182.5" width="11" height="8.5" fill="#f4eccc" stroke="#888" stroke-width="0.8"/><circle cx="1481" cy="191.5" r="4.8" fill="#f4eccc" fill-opacity="0.85" stroke="#888" stroke-width="0.8"/><rect x="1468.5" y="229" width="17.5" height="11.5" rx="2.5" fill="#f6f6f6" stroke="#c6d4e8" stroke-width="0.9"/><rect x="1468" y="283.5" width="3.5" height="3" fill="#111"/><rect x="1473.5" y="283.5" width="13" height="3" fill="#fff" stroke="#555" stroke-width="0.7"/><rect x="1468" y="289.7" width="3.5" height="3" fill="#111"/><rect x="1473.5" y="289.7" width="13" height="3" fill="#fff" stroke="#555" stroke-width="0.7"/><rect x="1468" y="295.9" width="3.5" height="3" fill="#111"/><rect x="1473.5" y="295.9" width="13" height="3" fill="#fff" stroke="#555" stroke-width="0.7"/><path d="M1467.5 330 H1487 L1479.5 337 V345 L1476 343 V337 Z" fill="#d8d8d8" stroke="#555" stroke-width="0.8"/><path d="M1468.5 376.5 L1474 379 V386 L1468.5 388.5 Z" fill="#fff" stroke="#444" stroke-width="0.8"/><rect x="1474" y="378" width="10" height="9" fill="#bbb" stroke="#666" stroke-width="0.7"/><path d="M1470 382.5 H1488" stroke="#e87070" stroke-width="0.6" stroke-dasharray="1 1"/><path d="M1467 432 H1479 M1467 435 H1478 M1467 438 H1480 M1467 441 H1479" stroke="#888" stroke-width="0.7"/><rect x="1464" y="446" width="26.5" height="5.5" fill="#fff" stroke="#666" stroke-width="0.6"/><text x="1466" y="450.6" font-size="4.5" fill="#333">&lt;  command</text><rect x="1470" y="479" width="14" height="16.5" rx="1" fill="#c08a2a" stroke="#9a6a14" stroke-width="0.8"/><rect x="1472" y="480.5" width="10" height="13.5" fill="#f4f4f4"/><rect x="1474" y="477.5" width="6" height="3" fill="#888"/></svg>
</body></html>
